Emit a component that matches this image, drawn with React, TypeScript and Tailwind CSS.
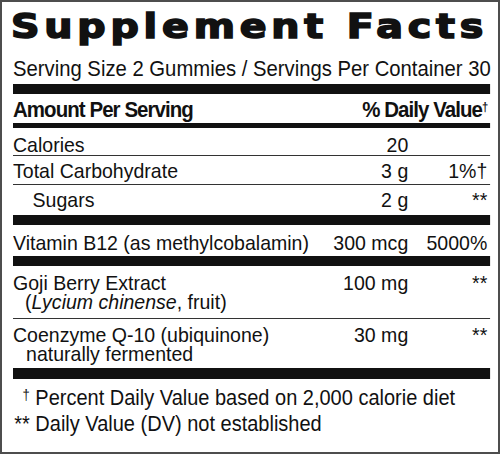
const body = { fontFamily: '"Liberation Sans", Arial, sans-serif' };

function Row({
  children,
  amount,
  dv,
  className = "",
}: {
  children: React.ReactNode;
  amount?: React.ReactNode;
  dv?: React.ReactNode;
  className?: string;
}) {
  return (
    <div className={`flex text-[21px] ${className}`}>
      <div className="flex-1 min-w-0 whitespace-nowrap">{children}</div>
      <div className="w-[90px] text-right whitespace-nowrap">{amount}</div>
      <div className="w-[88px] pr-[3px] text-right whitespace-nowrap">{dv}</div>
    </div>
  );
}

export default function App() {
  return (
    <div className="w-[500px] h-[454px] border-2 border-[#4d4d4d] bg-white overflow-hidden pl-[11px] pr-[8px] text-[#111]">
      <h1
        className="mt-[8px] -ml-[2px] origin-top-left scale-x-[1.2] text-[33px] leading-[33px] font-bold tracking-[4px] whitespace-nowrap [-webkit-text-stroke:1.6px_#111]"
        style={{ fontFamily: '"DejaVu Sans", sans-serif' }}
      >
        Supplement Facts
      </h1>

      <div className="w-[513px] origin-top-left scale-x-[0.93]" style={body}>
        <p className="mt-[15px] text-[21.8px] leading-[22px] whitespace-nowrap">
          Serving Size 2 Gummies / Servings Per Container 30
        </p>
        <div className="mt-[4px] h-[10px] bg-[#111]" />

        <div className="mt-[5px] flex justify-between text-[22px] leading-[22px] font-bold tracking-[-1px] pr-[3px]">
          <span>Amount Per Serving</span>
          <span>
            % Daily Value<sup className="text-[12px] -top-[0.5em]">†</sup>
          </span>
        </div>
        <div className="mt-[2px] h-[5px] bg-[#111]" />

        <Row amount="20" className="pt-[7px] leading-[20px] border-b border-[#333]">
          Calories
        </Row>
        <Row amount="3 g" dv="1%†" className="pt-[5px] pb-[3px] leading-[20px] border-b border-[#333]">
          Total Carbohydrate
        </Row>
        <Row amount="2 g" dv="**" className="pt-[5px] leading-[20px]">
          <span className="pl-[21px]">Sugars</span>
        </Row>
        <div className="mt-[5px] h-[10px] bg-[#111]" />

        <Row amount="300 mcg" dv="5000%" className="pt-[8px] leading-[20px]">
          Vitamin B12 (as methylcobalamin)
        </Row>
        <div className="mt-[3px] h-[10px] bg-[#111]" />

        <Row amount="100 mg" dv="**" className="pt-[7px] pb-[7px] leading-[19px] border-b border-[#333]">
          <div>Goji Berry Extract</div>
          <div className="pl-[13px]">
            (<i>Lycium chinense</i>, fruit)
          </div>
        </Row>
        <Row amount="30 mg" dv="**" className="pt-[6px] leading-[19px]">
          <div>Coenzyme Q-10 (ubiquinone)</div>
          <div className="pl-[14px]">naturally fermented</div>
        </Row>
        <div className="mt-[5px] h-[11px] bg-[#111]" />

        <div className="mt-[6px] text-[21.5px] leading-[26px]">
          <div className="flex">
            <span className="w-[18px] text-right text-[14px] leading-[20px]">†</span>
            <span className="pl-[6px] whitespace-nowrap">Percent Daily Value based on 2,000 calorie diet</span>
          </div>
          <div className="flex">
            <span className="w-[18px] text-right">**</span>
            <span className="pl-[6px] whitespace-nowrap">Daily Value (DV) not established</span>
          </div>
        </div>
      </div>
    </div>
  );
}
